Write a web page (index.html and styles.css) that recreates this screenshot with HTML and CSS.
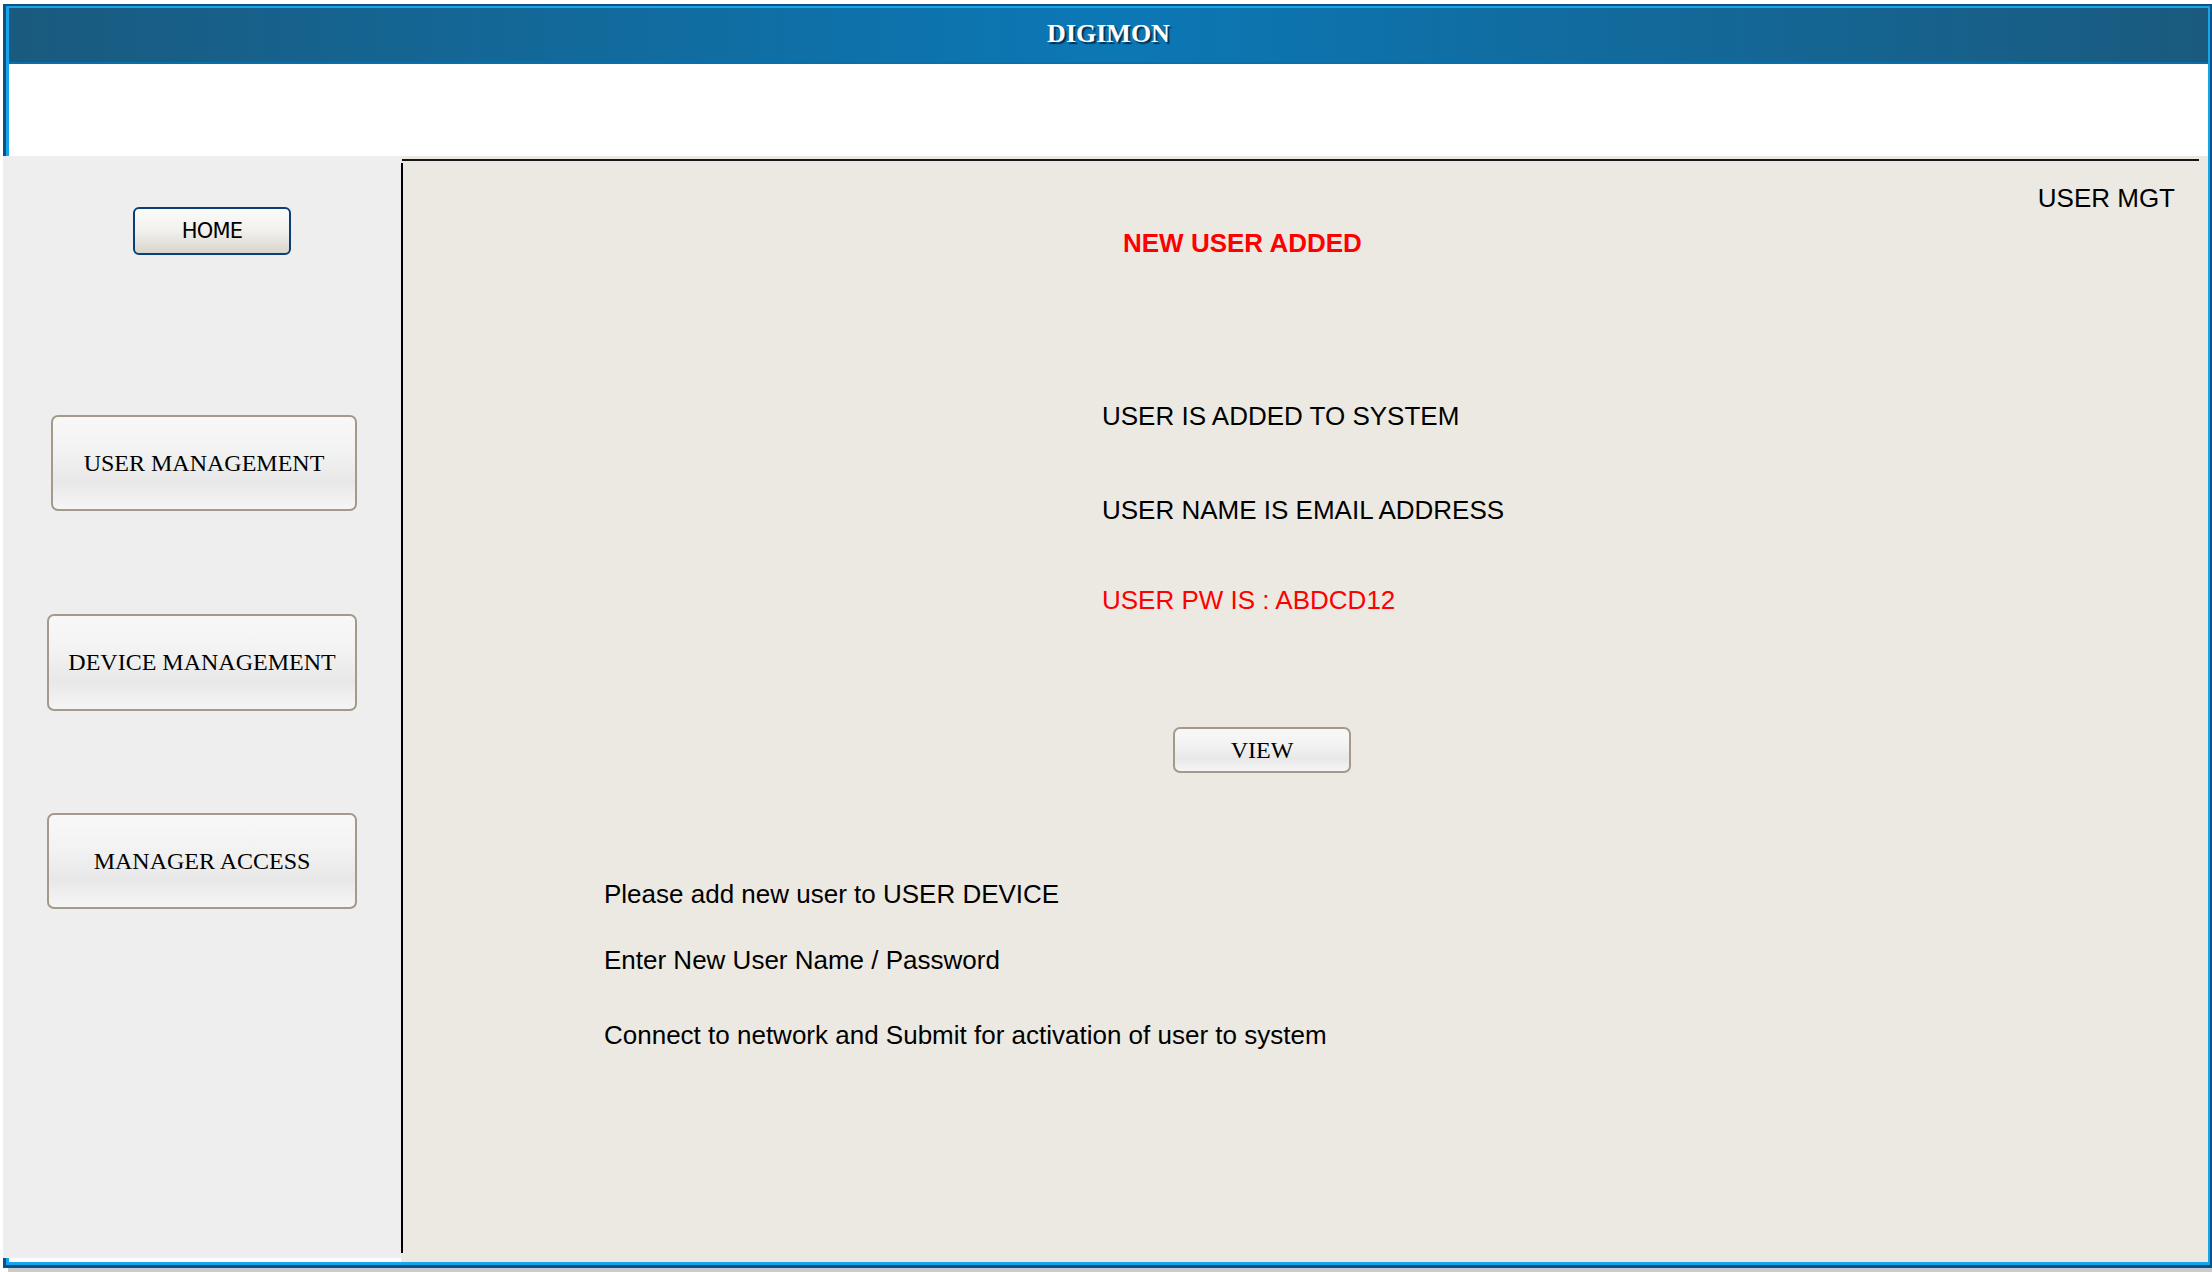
FILE: index.html
```html
<!DOCTYPE html>
<html>
<head>
<meta charset="utf-8">
<title>DIGIMON</title>
<link rel="stylesheet" href="styles.css">
</head>
<body>
<div class="frame">
  <div class="frame-inner">
    <header class="titlebar"><h1 class="title">DIGIMON</h1></header>
    <div class="banner"></div>
    <div class="main">
      <nav class="sidebar">
        <button class="btn-home">HOME</button>
        <button class="btn-side btn-um">USER MANAGEMENT</button>
        <button class="btn-side btn-dm">DEVICE MANAGEMENT</button>
        <button class="btn-side btn-ma">MANAGER ACCESS</button>
      </nav>
      <section class="content">
        <div class="topline"></div>
        <div class="panel">
          <div class="tag">USER MGT</div>
          <div class="headline">NEW USER ADDED</div>
          <p class="info info-1">USER IS ADDED TO SYSTEM</p>
          <p class="info info-2">USER NAME IS EMAIL ADDRESS</p>
          <p class="info info-3 red">USER PW IS : ABDCD12</p>
          <button class="btn-side btn-view">VIEW</button>
          <p class="note note-1">Please add new user to USER DEVICE</p>
          <p class="note note-2">Enter New User Name / Password</p>
          <p class="note note-3">Connect to network and Submit for activation of user to system</p>
        </div>
      </section>
    </div>
  </div>
</div>
</body>
</html>
```

FILE: styles.css
```css
html, body {
  margin: 0;
  padding: 0;
  width: 2212px;
  height: 1272px;
  overflow: hidden;
  background: #ffffff;
  font-family: "Liberation Sans", Arial, sans-serif;
}

.frame {
  margin: 4px 0 0 3px;
  width: 2209px;
  height: 1264px;
  box-sizing: border-box;
  border-style: solid;
  border-color: #0c5283;
  border-width: 2px 2px 3px 3px;
  box-shadow: 5px 4px 0 #cccccc;
}

.frame-inner {
  height: 100%;
  box-sizing: border-box;
  border-style: solid;
  border-color: #19a3ea;
  border-width: 2px 2px 3px 3px;
  display: flex;
  flex-direction: column;
}

.titlebar {
  height: 54px;
  border-bottom: 2px solid #0a70ab;
  background: linear-gradient(to right, #1a5a7e 0%, #0b78b6 50%, #1a5a7e 100%);
  text-align: center;
}

.title {
  margin: 0;
  font-family: "Liberation Serif", "Times New Roman", serif;
  font-weight: bold;
  font-size: 26px;
  line-height: 52px;
  color: #ffffff;
  text-shadow: 2px 2px 1px #07304e;
}

.banner {
  height: 92px;
  background: #ffffff;
}

.main {
  flex: 1;
  display: flex;
  margin-left: -6px;
}

.sidebar {
  width: 398px;
  height: 1102px;
  flex: none;
  background: #eeeeee;
  display: flex;
  flex-direction: column;
  align-items: flex-start;
}

.btn-home {
  margin: 51px 0 0 130px;
  width: 158px;
  height: 48px;
  box-sizing: border-box;
  border: 2px solid #0b3e79;
  border-radius: 6px;
  background: linear-gradient(to bottom, #fbfbfa 0%, #f1f0ec 50%, #d9d5cd 100%);
  font-family: "DejaVu Sans", Verdana, sans-serif;
  font-size: 21px;
  letter-spacing: -0.8px;
  color: #000000;
  padding: 0;
}

.btn-side {
  box-sizing: border-box;
  border: 2px solid #a39a8b;
  border-radius: 7px;
  background: linear-gradient(to bottom, #f8f8f8 0%, #f3f3f3 35%, #e8e8e8 70%, #f5f5f5 100%);
  font-family: "Liberation Serif", "Times New Roman", serif;
  font-size: 24px;
  color: #000000;
  padding: 0;
}

.btn-um {
  margin: 160px 0 0 48px;
  width: 306px;
  height: 96px;
}

.btn-dm {
  margin: 103px 0 0 44px;
  width: 310px;
  height: 97px;
}

.btn-ma {
  margin: 102px 0 0 44px;
  width: 310px;
  height: 96px;
}

.content {
  flex: 1;
  background: #ece9e2;
  display: flex;
  flex-direction: column;
}

.topline {
  height: 2px;
  margin: 3px 9px 0 1px;
  background: #161616;
}

.panel {
  flex: 1;
  margin: 2px 0 9px 0;
  border-left: 2px solid #000000;
  display: flex;
  flex-direction: column;
  align-items: flex-start;
}

.tag {
  align-self: stretch;
  margin-top: 20px;
  padding-right: 33px;
  text-align: right;
  font-size: 26px;
  line-height: 30px;
  color: #000000;
}

.headline {
  margin: 15px 0 0 720px;
  font-size: 26px;
  font-weight: bold;
  line-height: 30px;
  color: #ff0000;
}

.info {
  margin: 0 0 0 699px;
  font-size: 26px;
  line-height: 30px;
  color: #000000;
}

.info-1 { margin-top: 143px; }
.info-2 { margin-top: 64px; }
.info-3 { margin-top: 60px; }

.red { color: #ff0000; }

.btn-view {
  margin: 112px 0 0 770px;
  width: 178px;
  height: 46px;
}

.note {
  margin: 0 0 0 201px;
  font-size: 26px;
  line-height: 30px;
  color: #000000;
}

.note-1 { margin-top: 106px; }
.note-2 { margin-top: 36px; }
.note-3 { margin-top: 45px; }
```
